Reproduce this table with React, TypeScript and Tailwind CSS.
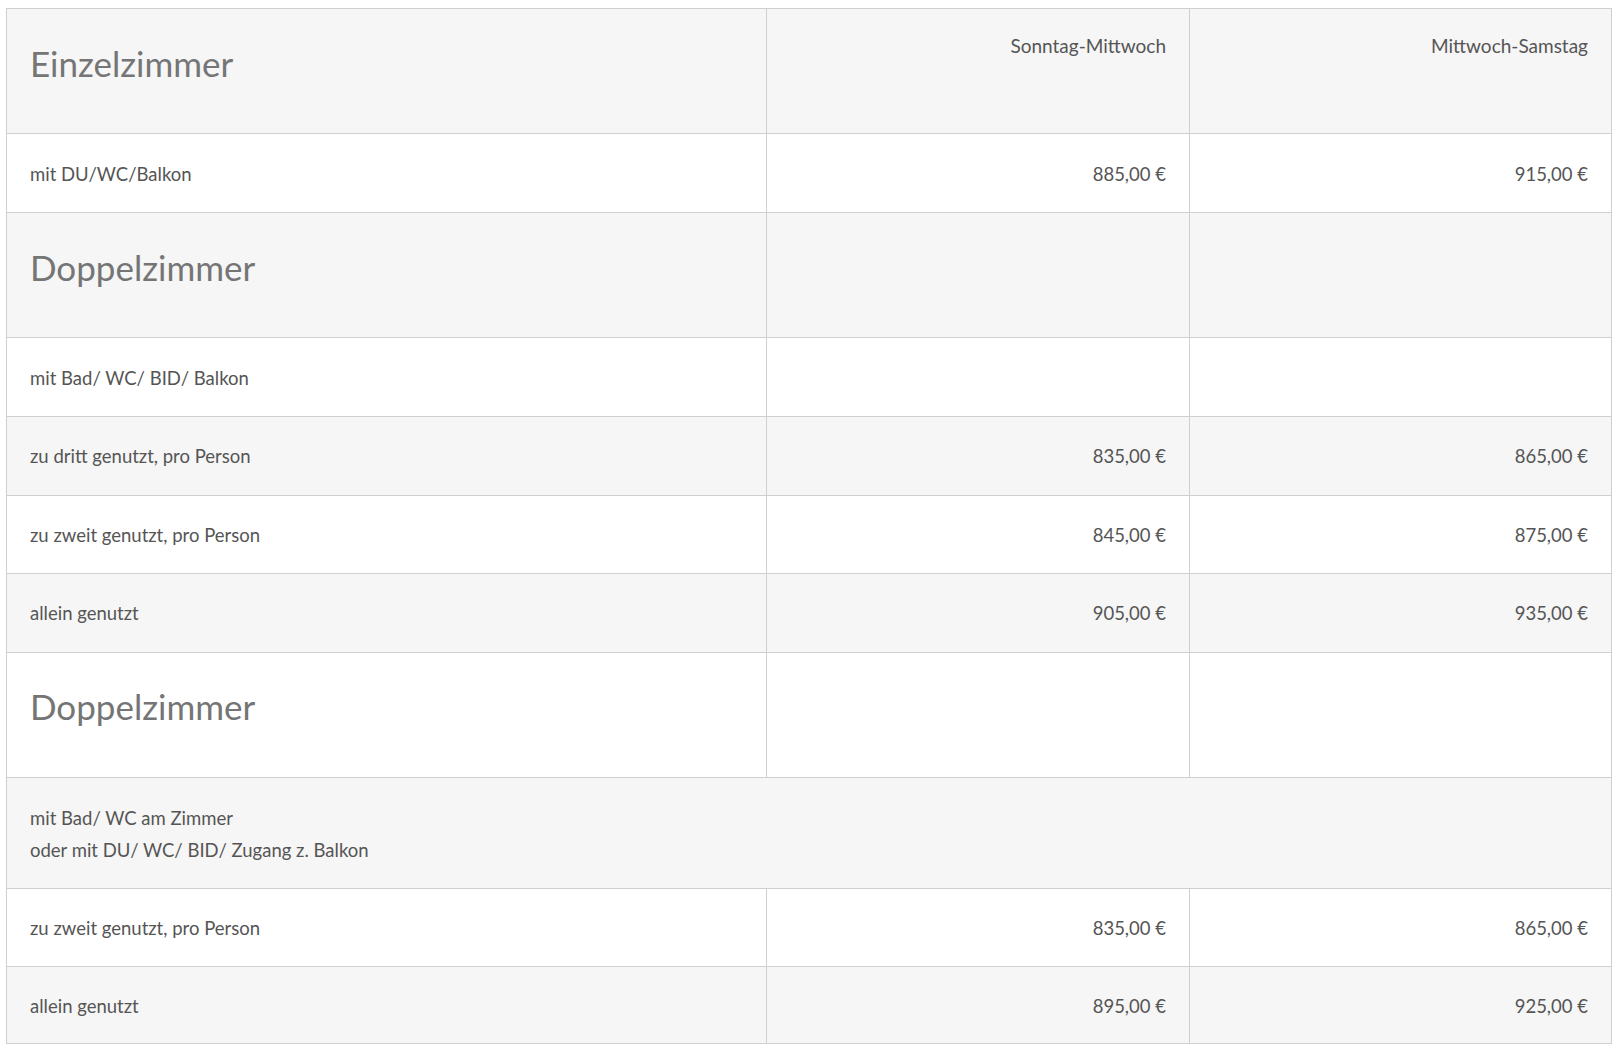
type Row =
  | { kind: "head"; title: string; cols?: [string, string]; shade: boolean; h: string }
  | { kind: "price"; label: string; a?: string; b?: string; shade: boolean; h: string }
  | { kind: "note"; lines: string[]; shade: boolean; h: string };

const rows: Row[] = [
  { kind: "head", title: "Einzelzimmer", cols: ["Sonntag-Mittwoch", "Mittwoch-Samstag"], shade: true, h: "h-[125px]" },
  { kind: "price", label: "mit DU/WC/Balkon", a: "885,00 €", b: "915,00 €", shade: false, h: "h-[79px]" },
  { kind: "head", title: "Doppelzimmer", shade: true, h: "h-[125px]" },
  { kind: "price", label: "mit Bad/ WC/ BID/ Balkon", shade: false, h: "h-[79px]" },
  { kind: "price", label: "zu dritt genutzt, pro Person", a: "835,00 €", b: "865,00 €", shade: true, h: "h-[78.5px]" },
  { kind: "price", label: "zu zweit genutzt, pro Person", a: "845,00 €", b: "875,00 €", shade: false, h: "h-[78.5px]" },
  { kind: "price", label: "allein genutzt", a: "905,00 €", b: "935,00 €", shade: true, h: "h-[78.5px]" },
  { kind: "head", title: "Doppelzimmer", shade: false, h: "h-[125px]" },
  { kind: "note", lines: ["mit Bad/ WC am Zimmer", "oder mit DU/ WC/ BID/ Zugang z. Balkon"], shade: true, h: "h-[111px]" },
  { kind: "price", label: "zu zweit genutzt, pro Person", a: "835,00 €", b: "865,00 €", shade: false, h: "h-[78.5px]" },
  { kind: "price", label: "allein genutzt", a: "895,00 €", b: "925,00 €", shade: true, h: "h-[77px]" },
];

function TableRow({ row }: { row: Row }) {
  const bg = row.shade ? "bg-[#f6f6f6]" : "bg-white";

  if (row.kind === "note") {
    return (
      <div className={`${row.h} ${bg} flex flex-col justify-center border-b border-[#cfcfcf] px-[23px] pt-[2px] text-[18.5px] leading-[32px]`}>
        {row.lines.map((l) => (
          <span key={l}>{l}</span>
        ))}
      </div>
    );
  }

  if (row.kind === "head") {
    return (
      <div className={`${row.h} ${bg} grid grid-cols-[759px_423px_1fr] border-b border-[#cfcfcf]`}>
        <div className="flex items-center px-[23px] pb-[16px]">
          <h2 className="text-[35px] font-normal leading-none text-[#757575]">{row.title}</h2>
        </div>
        <div className="border-l border-[#cfcfcf] px-[23px] pt-[21px] text-right text-[19px] leading-[32px]">
          {row.cols?.[0]}
        </div>
        <div className="border-l border-[#cfcfcf] px-[23px] pt-[21px] text-right text-[19px] leading-[32px]">
          {row.cols?.[1]}
        </div>
      </div>
    );
  }

  return (
    <div className={`${row.h} ${bg} grid grid-cols-[759px_423px_1fr] border-b border-[#cfcfcf] text-[18.5px]`}>
      <div className="flex items-center px-[23px] pt-[3px]">{row.label}</div>
      <div className="flex items-center justify-end border-l border-[#cfcfcf] px-[23px] pt-[3px]">{row.a}</div>
      <div className="flex items-center justify-end border-l border-[#cfcfcf] px-[23px] pt-[3px]">{row.b}</div>
    </div>
  );
}

export default function App() {
  return (
    <div className="min-h-screen bg-white pl-[6px] pt-[8px] font-['Lato',sans-serif] text-[#555555]">
      <div className="w-[1606px] border-x border-t border-[#cfcfcf]">
        {rows.map((r, i) => (
          <TableRow key={i} row={r} />
        ))}
      </div>
    </div>
  );
}
